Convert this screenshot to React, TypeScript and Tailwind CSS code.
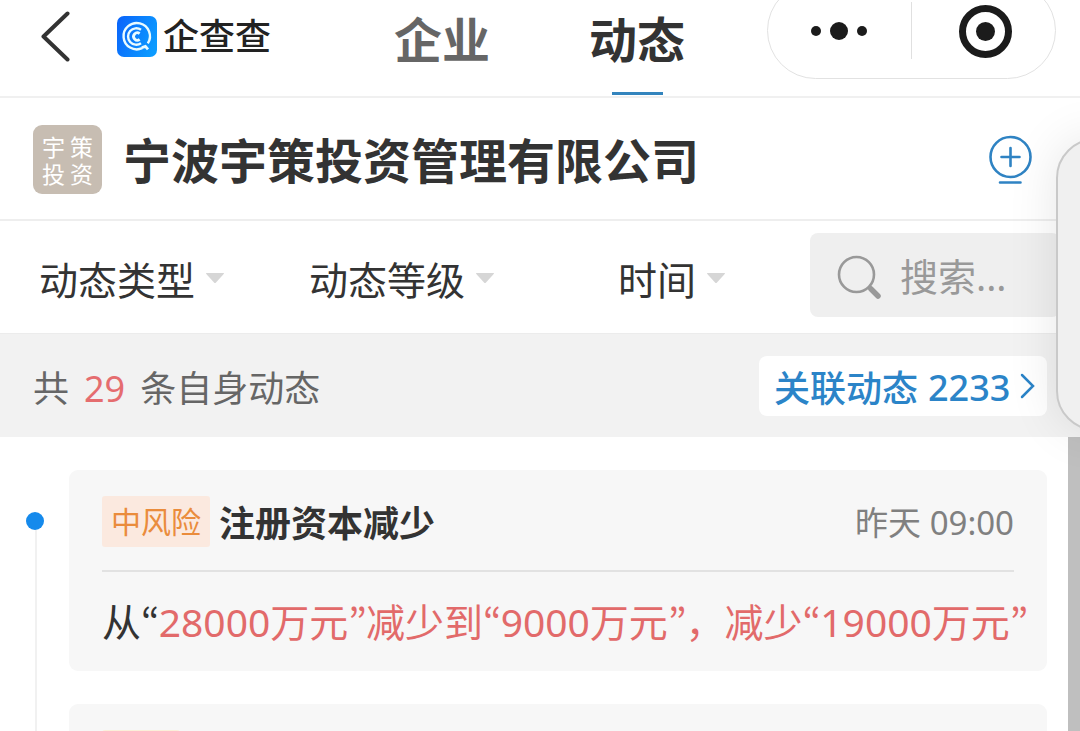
import { Fragment, type ReactNode } from "react";

const filters = [
  { label: "动态类型", className: "w-[270px]" },
  { label: "动态等级", className: "w-[309px]" },
  { label: "时间", className: "w-[192px]" },
];

function BrandIcon() {
  return (
    <svg viewBox="0 0 40 41" className="h-[41px] w-10" fill="none">
      <defs>
        <linearGradient id="brand" x1="0" y1="0.2" x2="1" y2="0.6">
          <stop offset="0" stopColor="#0a66fb" />
          <stop offset="1" stopColor="#0c9bff" />
        </linearGradient>
      </defs>
      <rect width="40" height="41" rx="7" fill="url(#brand)" />
      <g stroke="#e9fbff" strokeWidth="2.4">
        <path d="M30.8 27.4A13.2 13.2 0 1 0 25.2 32.2" />
        <path d="M24.800 31.600L28.4 30.400L31 33.4" strokeWidth="2.8" />
        <path d="M24 13.800A8.200 8.200 0 1 0 24 27.200" />
        <path d="M22.600 17.600A3.700 3.700 0 1 0 22.600 23.400" strokeWidth="2.8" />
      </g>
    </svg>
  );
}

function Header() {
  return (
    <header className="flex h-[98px] shrink-0 items-start border-b-2 border-[#f0f0f0]">
      <svg viewBox="0 0 30 54" className="ml-[41px] mt-[9px] h-[54px] w-[30px]" fill="none">
        <path d="M26.5 4.5L2.5 27.5L26.5 50.5" stroke="#333" strokeWidth="4" strokeLinecap="round" strokeLinejoin="round" />
      </svg>
      <div className="ml-[46px] mt-4 flex w-[278px] items-center">
        <BrandIcon />
        <span className="ml-[6px] text-[36px] font-medium leading-[41px] text-[#222]">企查查</span>
      </div>
      <nav className="flex text-[48px] font-bold leading-[80px]">
        <span className="ml-[-1px] w-[195px] text-[#666]">企业</span>
        <span className="relative w-24 text-[#333]">
          动态
          <i className="absolute left-[23px] top-[92px] h-[3px] w-[51px] bg-[#3384bd]" />
        </span>
      </nav>
      <div className="ml-[82px] mt-[-18px] flex h-[97px] w-[289px] items-center rounded-full border border-[#e2e2e2]">
        <div className="flex w-[141px] items-center justify-center gap-[9px]">
          <i className="size-[10px] rounded-full bg-[#1b1b1b]" />
          <i className="size-[18px] rounded-full bg-[#1b1b1b]" />
          <i className="size-[10px] rounded-full bg-[#1b1b1b]" />
        </div>
        <i className="ml-[2px] h-[57px] w-px bg-[#e0e0e0]" />
        <div className="ml-[47px] mt-[2px] flex size-[53px] items-center justify-center rounded-full border-[7px] border-[#1b1b1b]">
          <i className="size-[19px] rounded-full bg-[#1b1b1b]" />
        </div>
      </div>
    </header>
  );
}

function Company() {
  return (
    <section className="flex h-[123px] shrink-0 items-center border-b-2 border-[#eee] pl-[33px] pr-12 pt-[2px]">
      <div className="h-[69px] w-[69px] break-all rounded-[9px] bg-[#c7bdb2] pl-[9px] pt-[9px] text-[23px] leading-[27px] tracking-[5px] text-white">
        宇策投资
      </div>
      <h1 className="ml-[21px] grow pt-[2px] text-[48px] font-bold leading-[72px] text-[#333]">宁波宇策投资管理有限公司</h1>
      <svg viewBox="0 0 44 52" className="h-[52px] w-11" fill="none" stroke="#2f83c3" strokeWidth="2.6" strokeLinecap="round">
        <circle cx="22.5" cy="23" r="20" />
        <path d="M22.5 14v18M13.5 23h18M12 48.5h20.500" />
      </svg>
    </section>
  );
}

function Filters() {
  return (
    <section className="flex h-[113px] shrink-0 items-center overflow-hidden border-b border-[#ececec] pl-[39px]">
      {filters.map(({ label, className }) => (
        <div key={label} className={`flex shrink-0 items-center text-[39px] leading-[60px] text-[#333] ${className}`}>
          <span className="pt-[6px]">{label}</span>
          <svg viewBox="0 0 20 12" className="ml-[10px] mt-[2px] h-3 w-5" fill="#d6d6d6">
            <path d="M1.500 1H18.500Q19.500 1 18.700 2L11 10.500Q10 11.500 9 10.500L1.300 2Q.5 1 1.500 1Z" />
          </svg>
        </div>
      ))}
      <div className="mb-1 flex h-[84px] w-[250px] shrink-0 items-center rounded-lg bg-[#efefef] pl-[27px] text-[38px] text-[#999]">
        <svg viewBox="0 0 46 46" className="mt-1 size-[46px]" fill="none" stroke="#999">
          <circle cx="19.500" cy="20.500" r="17.500" strokeWidth="2.600" />
          <path d="M31.500 32.500L34 35" strokeWidth="4" />
          <path d="M34 35L41 42" strokeWidth="5.500" strokeLinecap="round" />
        </svg>
        <span className="ml-[17px] pt-[3px]">搜索...</span>
      </div>
    </section>
  );
}

function Summary() {
  return (
    <section className="flex h-[103px] shrink-0 items-center justify-between bg-[#f2f2f2] px-[33px] pt-px">
      <p className="flex pt-[5px] text-[36px] text-[#666]">
        共<span className="ml-[15px] mr-[15px] text-[#e56d6f]">29</span>条自身动态
      </p>
      <button className="flex h-[60px] w-72 items-center rounded-lg bg-white pl-[15px] text-[36px] font-medium text-[#2b84c8]">
        <span className="pt-[6px]">关联动态</span>
        <span className="ml-[10px] pt-1">2233</span>
        <svg viewBox="0 0 16 26" className="ml-[10px] h-[26px] w-4" fill="none">
          <path d="M2 2L13 13L2 24" stroke="#2b84c8" strokeWidth="2.500" strokeLinecap="round" />
        </svg>
      </button>
    </section>
  );
}

// Latin fonts draw the quotes too narrow between Chinese characters
function Quoted({ text }: { text: string }) {
  return text.split(/([“”])/).map((part, i) => (
    <Fragment key={i}>
      {part === "“" || part === "”" ? (
        <span className="inline-block w-[17.700px] text-center font-['Noto_Sans_CJK_KR',sans-serif] leading-none">{part}</span>
      ) : (
        part
      )}
    </Fragment>
  ));
}

function Card({ children, className }: { children: ReactNode; className: string }) {
  return <article className={`w-[978px] shrink-0 rounded-[9px] bg-[#f7f7f7] px-[33px] ${className}`}>{children}</article>;
}

function Timeline() {
  return (
    <main className="flex grow">
      <div className="ml-[26px] flex w-[43px] flex-col pt-[75px]">
        <i className="size-[18px] shrink-0 rounded-full bg-[#158aec]" />
        <i className="ml-[9px] w-[2px] grow bg-[#f1f1f1]" />
      </div>
      <div className="flex w-[999px] flex-col gap-[33px] pt-[33px]">
        <Card className="h-[201px]">
          <div className="flex h-[102px] items-center border-b-2 border-[#e2e2e2] pt-[2px]">
            <span className="flex h-[51px] w-[108px] items-center justify-center rounded-[3px] bg-[#fbe9df] text-[30px] text-[#ea8c3c]">
              中风险
            </span>
            <h2 className="ml-[9px] grow pt-[6px] text-[36px] font-bold text-[#333]">注册资本减少</h2>
            <time className="pt-1 text-[33px] text-[#808080]">昨天 09:00</time>
          </div>
          <p className="whitespace-nowrap pt-5 text-[39px] leading-[60px] text-[#e26a6a]">
            <span className="text-[#333]">
              <Quoted text="从“" />
            </span>
            <Quoted text="28000万元”减少到“9000万元”，减少“19000万元”" />
          </p>
        </Card>
        <Card className="h-[201px] pt-[26px]">
          <div className="h-[51px] w-[78px] rounded-[3px] bg-[#fbefd9]" />
        </Card>
      </div>
      <div className="w-3 bg-[#bfbfbf]" />
    </main>
  );
}

export default function App() {
  return (
    <div className="relative flex h-[731px] w-[1080px] flex-col overflow-hidden bg-white font-['Noto_Sans','Noto_Sans_CJK_SC',sans-serif]">
      <Header />
      <Company />
      <Filters />
      <Summary />
      <Timeline />
      <aside className="absolute left-[1056px] top-[138px] h-[293px] w-20 rounded-[40px] border-2 border-[#c9c9c9] bg-[#f0f0f0] shadow-[0_0_50px_rgba(0,0,0,0.1)]" />
    </div>
  );
}
